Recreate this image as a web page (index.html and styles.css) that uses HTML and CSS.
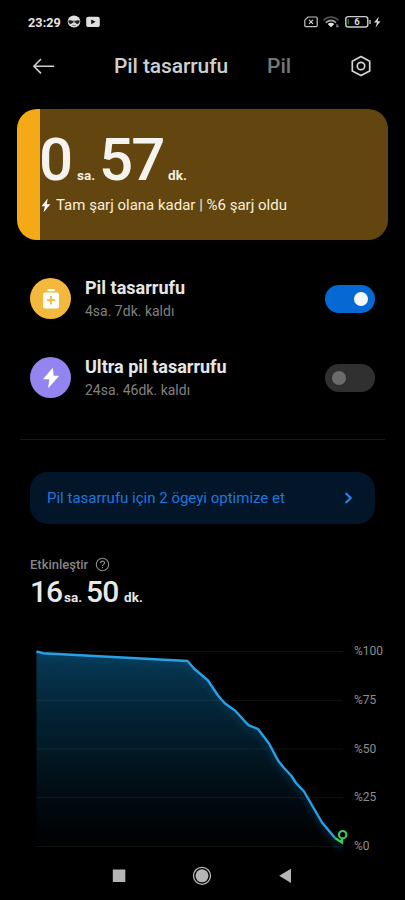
FILE: index.html
```html
<!DOCTYPE html>
<html lang="tr">
<head>
<meta charset="utf-8">
<meta name="viewport" content="width=device-width, initial-scale=1">
<title>Pil tasarrufu</title>
<link rel="stylesheet" href="styles.css">
</head>
<body>
<div class="screen">
  <div class="status">
    <span class="clock">23:29</span>
    <svg class="s-face" width="14" height="14" viewBox="0 0 14 14"><ellipse cx="7" cy="6.6" rx="6.3" ry="6" fill="#dedede"/><path d="M1.2 5.6 Q4 4.6 6 6 L7 5.5 L8 6 Q10 4.6 12.8 5.6 L12.2 8 L10.3 9.2 L8 7.6 L7 8.6 L6 7.6 L3.7 9.2 L1.8 8Z" fill="#222"/><path d="M7 6.2v3.2" stroke="#dedede" stroke-width="1.2"/><path d="M5.3 10.2 Q7 11 8.7 10.2" stroke="#444" stroke-width=".7" fill="none"/></svg>
    <svg class="s-video" width="14" height="12" viewBox="0 0 14 12"><rect x=".2" y=".7" width="13.6" height="10.4" rx="2.2" fill="#dedede"/><path d="M5.2 3.4v4.8L9.6 5.8z" fill="#111"/></svg>
    <svg class="s-sys" width="78" height="14" viewBox="0 0 78 14" fill="none">
      <path d="M4 2h8.2q1 0 1 1v7.6q0 1-1 1H1.8q-1 0-1-1V5.2z" stroke="#c4c4c4" stroke-width="1.2"/><path d="M5 4.8l4 4M9 4.8l-4 4" stroke="#d2d2d2" stroke-width="1.2"/>
      <path d="M19.4 5.2Q27-1.3 34.6 5.2" stroke="#5c5c5c" stroke-width="1.5"/><path d="M21.8 7.7Q27 3.3 32.2 7.7" stroke="#999" stroke-width="1.7"/><path d="M23.7 9Q27 6.6 30.3 9L27 12.2z" fill="#e5e5e5"/><path d="M32 11.2h3M33 9v3.5" stroke="#888"/>
      <rect x="41.8" y="1.6" width="22" height="10.4" rx="2.6" stroke="#ccc" stroke-width="1.4"/><path d="M44.3 4v5.6" stroke="#397a3b" stroke-width="1.3"/><path d="M66 5v4" stroke="#ccc" stroke-width="1.3"/><text class="battery-num" x="53.1" y="10.4" text-anchor="middle">6</text>
      <path d="M75 1.5l-5 6h3l-1.5 5 5-6.2h-3z" fill="#ddd"/>
    </svg>
  </div>

  <div class="header">
    <svg class="back" width="24" height="18" viewBox="0 0 24 18" fill="none" stroke="#cfcfcf" stroke-width="1.6"><path d="M9 2L1.9 9.2 9 16.4M1.9 9.2H22.2"/></svg>
    <span class="tab tab-on">Pil tasarrufu</span>
    <span class="tab tab-off">Pil</span>
    <svg class="gear" width="22" height="22" viewBox="0 0 22 22" fill="none" stroke="#d4d4d4" stroke-width="1.7" stroke-linejoin="round"><path d="M11 1.6l8.7 4.6v9.7L11 20.5l-8.7-4.6V6.2z"/><circle cx="11" cy="11" r="3.7"/></svg>
  </div>

  <section class="hero">
    <div class="hero-time"><span class="big hours">0</span><span class="unit">sa.</span><span class="big minutes">57</span><span class="unit">dk.</span></div>
    <div class="hero-note"><svg width="10" height="15" viewBox="0 0 10 15"><path d="M6.7.4L.6 8.2h3.2L2.6 14.2 9.4 6.2H5.8z" fill="#fff"/></svg><span>Tam şarj olana kadar | %6 şarj oldu</span></div>
  </section>

  <div class="mode">
    <span class="badge gold"><svg width="18" height="22" viewBox="0 0 18 22"><rect x="5.4" y="1" width="7.6" height="2.3" rx="1" fill="#fff"/><rect x="1" y="4.4" width="16" height="16" rx="2.2" fill="#fff"/><path d="M9 8v8.4M4.8 12.2h8.4" stroke="#f4b93c" stroke-width="1.8"/></svg></span>
    <span class="mode-text"><b>Pil tasarrufu</b><small>4sa. 7dk. kaldı</small></span>
    <span class="toggle on"></span>
  </div>
  <div class="mode">
    <span class="badge violet"><svg width="18" height="22" viewBox="0 0 18 22"><path d="M10.6 1.3L1.5 12h6.2L6.5 20.6 16.6 9.1h-5.2z" fill="#fff" stroke="#fff" stroke-width=".6" stroke-linejoin="round"/></svg></span>
    <span class="mode-text"><b class="ultra">Ultra pil tasarrufu</b><small>24sa. 46dk. kaldı</small></span>
    <span class="toggle"></span>
  </div>

  <div class="divider"></div>

  <div class="banner"><span>Pil tasarrufu için 2 ögeyi optimize et</span><svg width="10" height="14" viewBox="0 0 10 14" fill="none" stroke="#2b83ec" stroke-width="2.2"><path d="M1.6 2l5 5-5 5"/></svg></div>

  <div class="active-label"><span>Etkinleştir</span><svg width="15" height="15" viewBox="0 0 15 15" fill="none" stroke="#8b8b8b" stroke-width="1.1"><circle cx="7.5" cy="7.5" r="6.2"/><path d="M5.6 6.3C5.6 3.3 9.6 3.6 9.5 6 9.4 7.4 7.5 7.3 7.5 9M7.5 10v1.2"/></svg></div>
  <div class="active-time"><span class="mid">16</span><span class="unit">sa.</span><span class="mid second">50</span><span class="unit">dk.</span></div>

  <div class="chart">
    <svg width="318" height="215" viewBox="30 640 318 215">
      <defs>
        <linearGradient id="fill" x1="0" y1="651" x2="0" y2="847" gradientUnits="userSpaceOnUse"><stop offset="0" stop-color="#073a58"/><stop offset=".25" stop-color="#04273b"/><stop offset=".5" stop-color="#021925"/><stop offset=".78" stop-color="#01090f"/><stop offset="1" stop-color="#000"/></linearGradient>
        <filter id="glow" x="-10%" y="-10%" width="120%" height="120%"><feGaussianBlur stdDeviation="2.5"/></filter>
      </defs>
      <path d="M36.5 651.5L43 653.2 187.5 661 194 668.5 208 680.5 218 695.5 225 703.5 235 710.5 248.500 725.200 258 729 269 743.500 278 760.500 284 768 291.500 776 296 783 304 791.500 322 822.500 335 838 343 846.500H36.500z" fill="url(#fill)"/>
      <path d="M38 657L187.500 665.500 194 673 208 685 218 700 235 715 248 730 258 734 269 748 278 765 304 796 322 827 335 843 342 850" fill="none" stroke="#0a496b" stroke-opacity=".35" stroke-width="5" filter="url(#glow)"/>
      <path d="M36.500 651.500H343M36.500 700.300H343M36.500 749H343M36.500 797.700H343M36.500 846.500H343" stroke="#8b969b" stroke-opacity=".25" stroke-dasharray="1 1"/>
      <path d="M36.500 651.500L43 653.200 187.500 661 194 668.500 208 680.500 218 695.500 225 703.500 235 710.500 248.500 725.200 258 729 269 743.500 278 760.500 284 768 291.500 776 296 783 304 791.500 322 822.500 335 838" fill="none" stroke="#27a2e8" stroke-width="2.400" stroke-linejoin="round"/>
      <path d="M335 838L342 842.500V838.500" fill="none" stroke="#3dc75d" stroke-width="2.400"/><circle cx="342.700" cy="834.700" r="3.700" fill="#000" stroke="#3dc75d" stroke-width="2.200"/>
    </svg>
    <div class="scale"><span>%100</span><span>%75</span><span>%50</span><span>%25</span><span>%0</span></div>
  </div>

  <nav class="nav">
    <svg width="14" height="20" viewBox="0 0 14 20"><rect x=".8" y="3.500" width="12.500" height="12.500" fill="#b5b5b5"/></svg>
    <svg width="20" height="20" viewBox="0 0 20 20"><circle cx="10" cy="9.800" r="8.500" fill="none" stroke="#b9b9b9" stroke-width="1.300"/><circle cx="10" cy="9.800" r="6.500" fill="#b5b5b5"/></svg>
    <svg width="14" height="20" viewBox="0 0 14 20"><path d="M13 2.700v14.300L1.200 9.800z" fill="#b5b5b5"/></svg>
  </nav>
</div>
</body>
</html>
```
FILE: styles.css
```css
* { box-sizing: border-box; }
body { margin: 0; background: #000; font-family: Roboto, "Noto Sans", sans-serif; }
.screen { width: 405px; height: 900px; overflow: hidden; background: #000; display: flex; flex-direction: column; }
svg { display: block; flex: none; }
span, b, small { white-space: nowrap; }

.status { height: 44px; padding: 0 23px 0 28px; display: flex; align-items: center; }
.clock { width: 39px; font-size: 12.6px; font-weight: 700; letter-spacing: .1px; color: #e4e4e4; }
.s-video { margin-left: 5px; }
.s-sys { margin-left: auto; }
.battery-num { font-size: 9.5px; font-weight: 700; fill: #ddd; }

.header { height: 65px; padding: 0 33px 22px 32px; display: flex; align-items: center; }
.tab { font-size: 21px; line-height: 26px; font-weight: 500; }
.tab-on { margin-left: 58px; width: 153px; color: #cecece; letter-spacing: -.1px; }
.tab-off { color: #777; }
.gear { margin-left: auto; }

.hero { height: 131px; margin: 0 17px; padding: 16px 0 0 24px; border-radius: 20px; background: linear-gradient(90deg, #f4a916 23px, #63460f 23px); color: #fff; }
.hero-time { height: 69px; display: flex; align-items: baseline; line-height: 69px; }
.big { font-size: 60px; font-weight: 500; color: #f5f3f0; }
.hours { width: 38px; margin-left: -2px; }
.minutes { width: 69px; margin-left: 4px; letter-spacing: -2px; }
.unit { font-size: 13.5px; font-weight: 700; color: #f5f0e4; }
.hero-note { display: flex; align-items: center; gap: 5px; height: 22px; font-size: 15px; color: #f8efdd; }

.mode { height: 41px; margin: 38px 30px 0; display: flex; align-items: center; }
.mode + .mode { margin-top: 38px; }
.badge { width: 41px; height: 41px; border-radius: 50%; display: flex; align-items: center; justify-content: center; }
.gold { background: #f4b93c; }
.violet { background: #9285f0; }
.mode-text { margin-left: 14px; display: flex; flex-direction: column; }
.mode-text b { font-size: 18px; line-height: 25px; font-weight: 700; color: #e6e6e6; }
.mode-text small { font-size: 14px; line-height: 23px; color: #808080; }
.toggle { margin-left: auto; width: 50px; height: 28px; padding: 7px; border-radius: 14px; background: #303030; display: flex; }
.toggle::before { content: ""; width: 14px; height: 14px; border-radius: 50%; background: #6b6b6b; }
.on { background: #0469d2; justify-content: flex-end; }
.on::before { background: #f6f7fa; }

.divider { height: 1px; margin: 41px 20px 0; background: #171717; flex: none; }
.banner { height: 52px; margin: 32px 30px 0; padding: 0 21px 0 17px; border-radius: 18px; background: #021529; color: #2177da; font-size: 15px; display: flex; align-items: center; justify-content: space-between; }
.active-label { height: 20px; margin: 30px 0 0 30px; display: flex; align-items: center; gap: 7px; font-size: 13px; font-weight: 500; color: #858585; }
.active-time { height: 36px; margin-left: 30px; display: flex; align-items: baseline; line-height: 36px; }
.active-time .unit { color: #e6e6e6; }
.mid { width: 34px; font-size: 30px; font-weight: 500; color: #e8e8e8; letter-spacing: -1px; }
.second { margin-left: 4px; width: 38px; }

.chart { height: 215px; margin: 30px 0 0 30px; display: flex; }
.scale { margin: 1px 0 0 6px; height: 215px; display: flex; flex-direction: column; justify-content: space-between; font-size: 12px; line-height: 20px; color: #8e8e8e; }
.nav { height: 20px; margin: 11px 113px 0 112px; display: flex; align-items: center; justify-content: space-between; }
```
